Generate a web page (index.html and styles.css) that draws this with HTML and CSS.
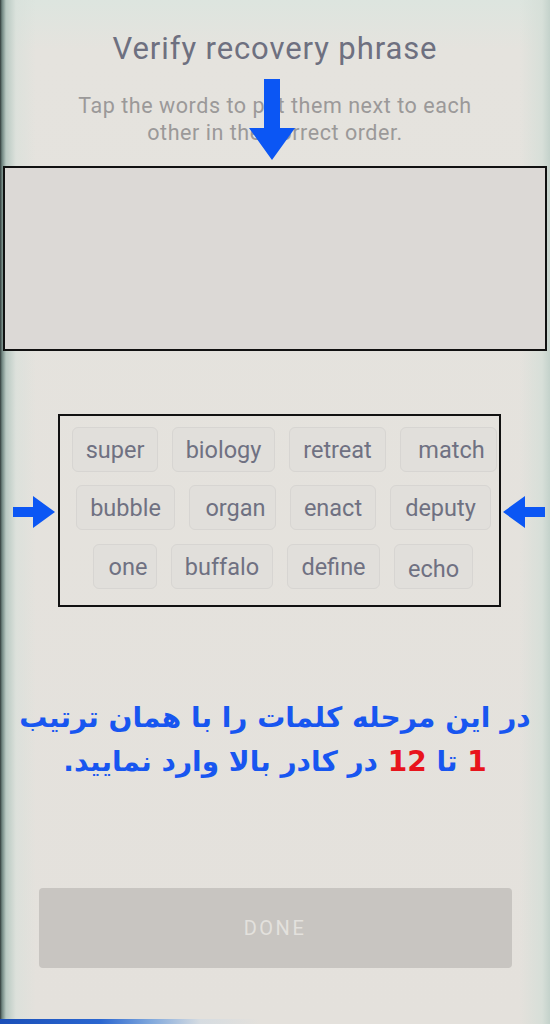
FILE: index.html
```html
<!DOCTYPE html>
<html lang="en">
<head>
<meta charset="utf-8">
<link rel="stylesheet" href="styles.css">
</head>
<body>
<div class="screen">
  <h1 class="title">Verify recovery phrase</h1>
  <p class="subtitle">Tap the words to put them next to each<br>other in the correct order.</p>
  <div class="answer-box"></div>

  <div class="words">
    <div class="row r1">
      <span class="chip w86">super</span><span class="chip w103">biology</span><span class="chip w97">retreat</span><span class="chip w97 shift">match</span>
    </div>
    <div class="row r2">
      <span class="chip w99">bubble</span><span class="chip w87 shift">organ</span><span class="chip w86">enact</span><span class="chip w101">deputy</span>
    </div>
    <div class="row r3">
      <span class="chip w64 shift">one</span><span class="chip w102">buffalo</span><span class="chip w93">define</span><span class="chip w79 low">echo</span>
    </div>
  </div>

  <p class="note" dir="rtl">در این مرحله کلمات را با همان ترتیب<br><span class="red">1</span> تا <span class="red">12</span> در کادر بالا وارد نمایید.</p>

  <div class="btn">DONE</div>

  <div class="bottom-strip"></div>

  <svg class="arrow arrow-down" width="46" height="81" viewBox="0 0 46 81"><path d="M15 0 H31 V49 H46 L23 81 L0 49 H15 Z" fill="#0b56f4"/></svg>
  <svg class="arrow arrow-right" width="42" height="32" viewBox="0 0 42 32"><path d="M0 11 H20 V0 L42 16 L20 32 V21 H0 Z" fill="#0b56f4"/></svg>
  <svg class="arrow arrow-left" width="42" height="32" viewBox="0 0 42 32"><path d="M42 11 H22 V0 L0 16 L22 32 V21 H42 Z" fill="#0b56f4"/></svg>
</div>
</body>
</html>
```

FILE: styles.css
```css
html, body {
  margin: 0;
  padding: 0;
}
body {
  width: 550px;
  height: 1024px;
  overflow: hidden;
  background: #e3e1dc;
  font-family: Roboto, "Liberation Sans", sans-serif;
}
.screen {
  position: relative;
  width: 550px;
  height: 1024px;
  display: flex;
  flex-direction: column;
  align-items: center;
  background:
    linear-gradient(90deg, #303a39 0, #6f8580 2px, #b9c9c2 6px, rgba(215,224,218,0.6) 16px, rgba(227,225,220,0) 36px, rgba(227,225,220,0) 520px, rgba(212,222,215,0.8) 542px, #c4d2cb 550px),
    linear-gradient(180deg, #dde5df 0, #e5e3de 50px, #e4e1dc 100%);
}
.title {
  margin: 30px 0 0;
  font-weight: 400;
  font-size: 31px;
  letter-spacing: 0.9px;
  line-height: 38px;
  color: #6e7080;
}
.subtitle {
  margin: 24px 0 0;
  text-align: center;
  font-size: 21.5px;
  letter-spacing: 0.55px;
  line-height: 27px;
  color: #9b9999;
}
.answer-box {
  align-self: flex-start;
  margin: 20px 0 0 3px;
  width: 540px;
  height: 181px;
  border: 2px solid #111;
  background: #dcd9d6;
}
.words {
  align-self: flex-start;
  margin: 63px 0 0 58px;
  width: 443px;
  box-sizing: border-box;
  border: 2px solid #111;
  padding: 11px 0 16px;
  display: flex;
  flex-direction: column;
  gap: 13px;
}
.row {
  display: flex;
  gap: 14px;
}
.r1 { padding-left: 12px; }
.r2 { padding-left: 16px; margin-bottom: 1px; }
.r3 { padding-left: 33px; }
.chip {
  height: 45px;
  box-sizing: border-box;
  border: 1px solid #d7d5d2;
  border-radius: 6px;
  background: #e1dfdb;
  color: #6f7182;
  font-size: 23.5px;
  line-height: 45px;
  text-align: center;
}
.shift { text-indent: 6px; }
.low { line-height: 48px; }
.w64 { width: 64px; }
.w79 { width: 79px; }
.w86 { width: 86px; }
.w87 { width: 87px; }
.w93 { width: 93px; }
.w97 { width: 97px; }
.w99 { width: 99px; }
.w101 { width: 101px; }
.w102 { width: 102px; }
.w103 { width: 103px; }
.note {
  margin: 89px 0 0;
  text-align: center;
  font-family: "DejaVu Sans", sans-serif;
  font-weight: 700;
  font-size: 28px;
  line-height: 44px;
  color: #1856f0;
}
.red { color: #e8141c; }
.btn {
  margin-top: 104px;
  width: 473px;
  height: 80px;
  border-radius: 4px;
  background: #c8c5c1;
  color: #e3e1dd;
  font-size: 20px;
  letter-spacing: 2.5px;
  display: flex;
  align-items: center;
  justify-content: center;
}
.bottom-strip {
  margin-top: auto;
  align-self: stretch;
  height: 5px;
  background: linear-gradient(90deg, #1b4fb8 0, #2a66d0 100px, #7fa7dc 150px, rgba(200,215,230,0.5) 200px, rgba(227,225,220,0) 260px);
}
.arrow { position: absolute; }
.arrow-down { left: 249px; top: 79px; }
.arrow-right { left: 13px; top: 496px; }
.arrow-left { left: 503px; top: 496px; }
```
